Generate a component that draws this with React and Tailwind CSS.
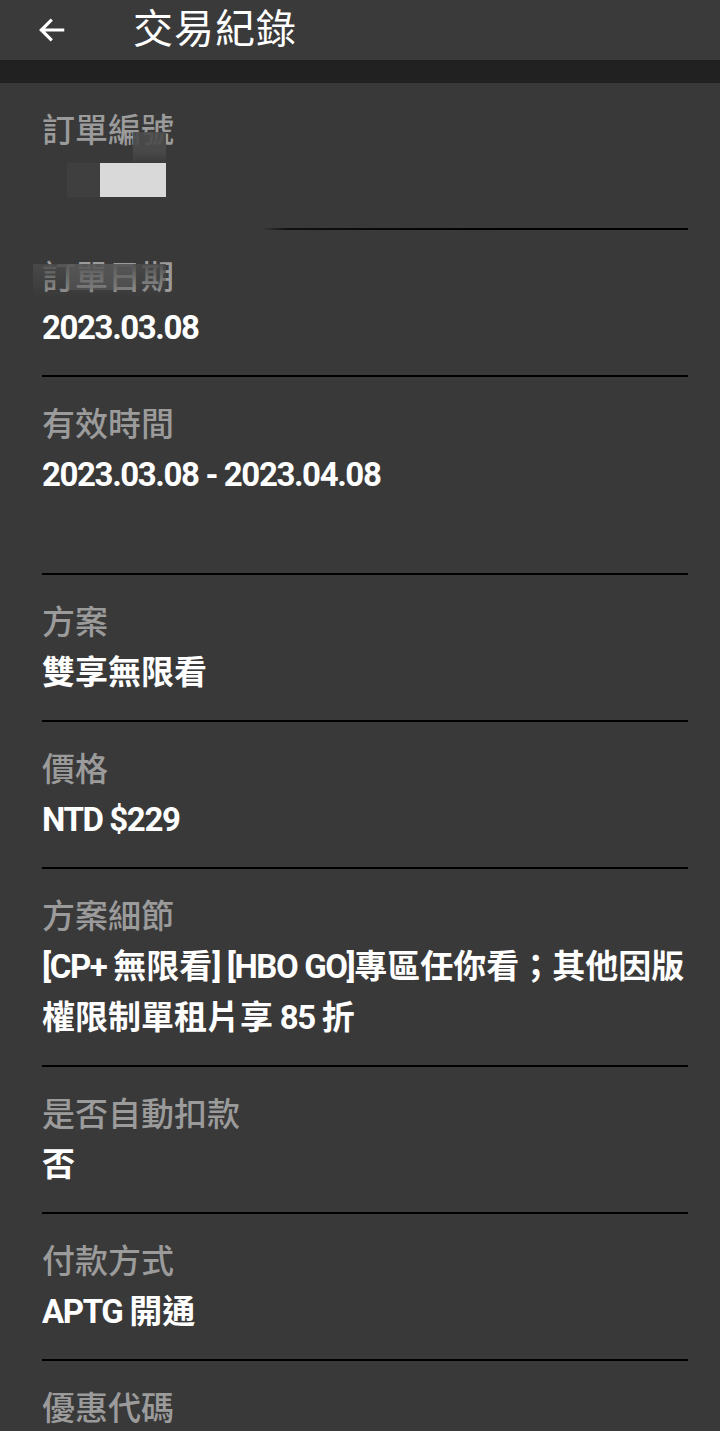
import React from "react";

const font = { fontFamily: "Roboto, 'Noto Sans CJK TC', sans-serif" };

const rows = [
  { label: "訂單日期", value: ["2023.03.08"] },
  { label: "有效時間", value: ["2023.03.08 - 2023.04.08", "\u00a0"] },
  { label: "方案", value: ["雙享無限看"] },
  { label: "價格", value: ["NTD $229"] },
  { label: "方案細節", value: ["[CP+ 無限看] [HBO GO]專區任你看；其他因版", "權限制單租片享 85 折"] },
  { label: "是否自動扣款", value: ["否"] },
  { label: "付款方式", value: ["APTG 開通"] },
];

// latin runs are narrower in the source app, tighten them
const Value = ({ text }) => (
  <div className="text-[33px] leading-[51px] font-bold text-white whitespace-nowrap">
    {text.split(/([\x20-\x7e]+)/).filter(Boolean).map((s, i) =>
      /^[\x20-\x7e]+$/.test(s) ? (
        <span key={i} className="tracking-[-1.4px]">{s}</span>
      ) : (
        <span key={i}>{s}</span>
      )
    )}
  </div>
);

const Row = ({ label, value, children }) => (
  <div className="relative">
    <div className="pt-6 pb-[22px]">
      <div className="text-[33px] leading-[48px] font-medium text-[#9b9b9b]">{label}</div>
      {value.map((v, i) => (
        <Value key={i} text={v} />
      ))}
    </div>
    {children}
    <div className="h-[2px] bg-black" />
  </div>
);

export default function App() {
  return (
    <div className="w-[720px] h-[1431px] overflow-hidden bg-[#393939]" style={font}>
      <div className="h-[60px] flex items-center bg-[#3a3a3a]">
        <svg className="ml-[36px]" width="32" height="32" viewBox="0 0 24 24" fill="none" stroke="white" strokeWidth="2.4" strokeLinecap="square">
          <path d="M20 12H4.5M11 5l-7 7 7 7" />
        </svg>
        <div className="ml-[65px] text-[40px] leading-none font-normal text-white tracking-[1px]">交易紀錄</div>
      </div>
      <div className="h-[23px] bg-[#212121]" />

      <div className="pl-[42px] pr-[32px]">
        <div className="relative">
          <div className="pt-6 pb-[22px]">
            <div className="text-[33px] leading-[48px] font-medium text-[#9b9b9b]">訂單編號</div>
            <div className="h-[51px]" />
          </div>
          <div className="absolute left-[91px] top-[49px] w-[33px] h-[32px] bg-[#4b4b4b] opacity-90" />
          <div className="absolute left-0 top-[68px] w-[130px] h-[14px] bg-gradient-to-b from-transparent to-[#393939]" />
          <div className="absolute left-[25px] top-[80px] w-[33px] h-[34px] bg-[#3f3f3f]" />
          <div className="absolute left-[58px] top-[80px] w-[66px] h-[34px] bg-[#d9d9d9]" />
          <div className="h-[2px] bg-gradient-to-r from-transparent from-[34%] via-[#111] via-[38%] to-black" />
        </div>

        {rows.map((r, i) => (
          <Row key={r.label} label={r.label} value={r.value}>
            {i === 0 && (
              <>
                <div className="absolute -left-[9px] top-[34px] w-[133px] h-[34px] bg-gradient-to-b from-[#4a4a4a] to-transparent opacity-90" />
                <div className="absolute left-[25px] top-[34px] w-[66px] h-[26px] bg-[#6a6a6a] opacity-40" />
              </>
            )}
          </Row>
        ))}

        <div className="pt-6">
          <div className="text-[33px] leading-[48px] font-medium text-[#9b9b9b]">優惠代碼</div>
        </div>
      </div>
    </div>
  );
}
